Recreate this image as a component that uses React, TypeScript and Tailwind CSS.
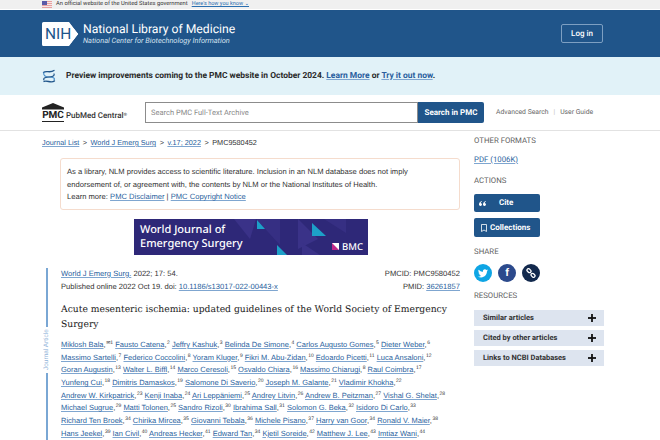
const authors: [string, string][][] = [
  [["Miklosh Bala", "✉1"], ["Fausto Catena", "2"], ["Jeffry Kashuk", "3"], ["Belinda De Simone", "4"], ["Carlos Augusto Gomes", "5"], ["Dieter Weber", "6"]],
  [["Massimo Sartelli", "7"], ["Federico Coccolini", "8"], ["Yoram Kluger", "9"], ["Fikri M. Abu-Zidan", "10"], ["Edoardo Picetti", "11"], ["Luca Ansaloni", "12"]],
  [["Goran Augustin", "13"], ["Walter L. Biffl", "14"], ["Marco Ceresoli", "15"], ["Osvaldo Chiara", "16"], ["Massimo Chiarugi", "8"], ["Raul Coimbra", "17"]],
  [["Yunfeng Cui", "18"], ["Dimitris Damaskos", "19"], ["Salomone Di Saverio", "20"], ["Joseph M. Galante", "21"], ["Vladimir Khokha", "22"]],
  [["Andrew W. Kirkpatrick", "23"], ["Kenji Inaba", "24"], ["Ari Leppäniemi", "25"], ["Andrey Litvin", "26"], ["Andrew B. Peitzman", "27"], ["Vishal G. Shelat", "28"]],
  [["Michael Sugrue", "29"], ["Matti Tolonen", "25"], ["Sandro Rizoli", "30"], ["Ibrahima Sall", "31"], ["Solomon G. Beka", "32"], ["Isidoro Di Carlo", "33"]],
  [["Richard Ten Broek", "34"], ["Chirika Mircea", "35"], ["Giovanni Tebala", "36"], ["Michele Pisano", "37"], ["Harry van Goor", "34"], ["Ronald V. Maier", "38"]],
  [["Hans Jeekel", "39"], ["Ian Civil", "40"], ["Andreas Hecker", "41"], ["Edward Tan", "34"], ["Kjetil Soreide", "42"], ["Matthew J. Lee", "43"], ["Imtiaz Wani", "44"]],
];

const link = "text-[#2a5f9e] underline decoration-[#7fa6d0]";
const sideHead = "font-['Roboto',sans-serif] text-[7.8px] leading-[12px] text-[#5f5f5f]";
const resources = ["Similar articles", "Cited by other articles", "Links to NCBI Databases"];

function Flag() {
  return (
    <svg width="10" height="7" viewBox="0 0 10 7">
      <rect width="10" height="7" fill="#e8a0a0" />
      <rect y="1" width="10" height="1" fill="#f5e6e6" />
      <rect y="3" width="10" height="1" fill="#f5e6e6" />
      <rect y="5" width="10" height="1" fill="#f5e6e6" />
      <rect width="5" height="4" fill="#5a5aa8" />
    </svg>
  );
}

function Helix() {
  return (
    <svg width="14" height="15" viewBox="0 0 14 15" fill="none" strokeLinecap="round">
      <path d="M1.5 3.5C4 1 8 4.5 12 1.5" stroke="#20558a" strokeWidth="1.3" />
      <path d="M2 3.5C0.5 6 3.5 8 7 8S13.5 9 12 11" stroke="#4b8fc8" strokeWidth="1.2" />
      <path d="M12 5C13 7 9.5 8 7 8S0.5 9 2 11" stroke="#20558a" strokeWidth="1.2" />
      <path d="M2 12.5C5 11 9 14.5 12.5 12" stroke="#20558a" strokeWidth="1.3" />
    </svg>
  );
}

function NihLogo() {
  return (
    <div className="relative w-[37px] h-[24px]">
      <svg width="37" height="24" viewBox="0 0 37 24">
        <path d="M1.5 0H27L36.5 12L27 24H1.5A1.5 1.5 0 0 1 0 22.5V1.5A1.5 1.5 0 0 1 1.5 0Z" fill="#fff" />
        <path d="M29 1.5L37 12L29 22.5" fill="none" stroke="#20558a" strokeWidth="1" />
      </svg>
      <span className="absolute left-[3px] top-[4px] font-['Roboto',sans-serif] text-[15.5px] leading-[17px] text-[#20558a]">NIH</span>
    </div>
  );
}

function PmcLogo() {
  return (
    <div className="flex items-end gap-[2px]">
      <div className="w-[22px] flex flex-col items-center">
        <svg width="22" height="7" viewBox="0 0 22 7">
          <path d="M11 0L22 4.5V6.5H0V4.5Z" fill="#222" />
        </svg>
        <span className="font-['Roboto',sans-serif] font-bold text-[10px] leading-[10px] text-[#222] mt-[1px] border-b border-[#222] w-full text-center">PMC</span>
      </div>
      <span className="font-['Roboto',sans-serif] font-medium text-[8px] leading-[12px] text-[#333]">
        PubMed Central<sup className="text-[4.5px]">®</sup>
      </span>
    </div>
  );
}

function JournalBanner() {
  return (
    <div className="relative w-[234px] h-[36px] bg-[#2e2878] overflow-hidden">
      <svg className="absolute inset-0" width="234" height="36" viewBox="0 0 234 36">
        <path d="M100 0H122L116 20Z" fill="#3a3288" />
        <path d="M122 0L146 26V0Z" fill="#3a3288" opacity="0.7" />
        <path d="M164 0L184 20L164 30Z" fill="#3a3288" />
        <path d="M190 0L212 0L212 14Z" fill="#3a3288" opacity="0.7" />
        <path d="M123 1L131 10H123Z" fill="#1da0c8" />
        <path d="M178 4L192 17H178Z" fill="#1da0c8" />
        <path d="M143 26L153 36H143Z" fill="#1da0c8" />
        <path d="M168 24L186 36H168Z" fill="#3a3288" />
        <rect x="198" y="24" width="7" height="7" fill="#fff" />
        <path d="M198 24L205 31H198Z" fill="#c0288a" />
      </svg>
      <div className="absolute left-[6px] top-[4px] font-['Noto_Sans',sans-serif] font-medium text-[11px] leading-[14px] text-white">
        <div>World Journal of</div>
        <div>Emergency Surgery</div>
      </div>
      <span className="absolute left-[208px] top-[23px] font-['Noto_Sans',sans-serif] font-medium text-[9.5px] leading-[10px] text-white">BMC</span>
    </div>
  );
}

function AuthorLine({ line }: { line: [string, string][] }) {
  return (
    <div className="whitespace-nowrap h-[12.7px]">
      {line.map(([name, sup], i) => (
        <span key={name + i}>
          <span className={link}>{name}</span>,<sup className="text-[5px] top-[-3px] ml-[0.5px]">{sup}</sup>{" "}
        </span>
      ))}
    </div>
  );
}

export default function App() {
  return (
    <div className="w-[660px] h-[440px] overflow-hidden bg-white font-['Liberation_Sans',Arial,sans-serif] text-[#333] [text-rendering:geometricPrecision]">
      <div className="h-[10px] bg-[#f0f0f0] border-b border-white flex items-center pl-[42px] gap-[3px] text-[5.8px] text-[#333]">
        <Flag />
        <span className="font-['Roboto',sans-serif] ml-[1px]">An official website of the United States government</span>
        <span className="font-['Roboto',sans-serif] text-[#2a6fb0] underline ml-[1px] text-[5.5px]">Here's how you know ⌄</span>
      </div>

      <header className="h-[47px] bg-[#20558a] flex items-center justify-between pl-[42px] pr-[57px]">
        <div className="flex items-center gap-[4px]">
          <NihLogo />
          <div className="font-['Roboto',sans-serif] text-white">
            <div className="text-[12.2px] leading-[13px]">National Library of Medicine</div>
            <div className="text-[7.4px] leading-[9px] italic text-[#d5e2ef]">National Center for Biotechnology Information</div>
          </div>
        </div>
        <div className="w-[42px] h-[19px] rounded-[2px] border border-[#7d9fc2] flex items-center justify-center font-['Roboto',sans-serif] font-medium text-[8px] text-white">Log in</div>
      </header>

      <div className="h-[38px] bg-[#e1f2f8] flex items-center pl-[42px] font-['Roboto',sans-serif] font-bold text-[8.45px] text-[#2b2b2b]">
        <Helix />
        <span className="ml-[10px]">
          Preview improvements coming to the PMC website in October 2024. <span className={link}>Learn More</span> or <span className={link}>Try it out now</span>.
        </span>
      </div>

      <div className="h-[36px] border-b border-[#e2e2e2] flex items-center pl-[42px] font-['Roboto',sans-serif]">
        <div className="w-[103px]">
          <PmcLogo />
        </div>
        <div className="w-[273px] h-[21px] border border-[#8c8c8c] bg-white flex items-center pl-[5px] text-[7.5px] text-[#8a8a8a]">Search PMC Full-Text Archive</div>
        <div className="w-[66px] h-[21px] rounded-r-[2px] bg-[#20558a] flex items-center justify-center font-bold text-[8px] text-white">Search in PMC</div>
        <div className="ml-[12px] flex items-center text-[6.8px] text-[#666]">
          <span>Advanced Search</span>
          <span className="mx-[5px] text-[#bbb]">|</span>
          <span>User Guide</span>
        </div>
      </div>

      <div className="flex pl-[42px]">
        <main className="w-[418px]">
          <div className="pt-[6px] h-[27px] text-[7.3px] leading-[12px] whitespace-nowrap">
            <span className={link}>Journal List</span>
            <span className="mx-[3.5px]">&gt;</span>
            <span className={link}>World J Emerg Surg</span>
            <span className="mx-[3.5px]">&gt;</span>
            <span className={link}>v.17; 2022</span>
            <span className="mx-[3.5px]">&gt;</span>
            <span>PMC9580452</span>
          </div>

          <div className="ml-[18px] h-[52px] rounded-[3px] border border-[#f5dccd] px-[6px] pt-[7px] text-[7.6px] leading-[12.7px] whitespace-nowrap">
            <div>As a library, NLM provides access to scientific literature. Inclusion in an NLM database does not imply</div>
            <div>endorsement of, or agreement with, the contents by NLM or the National Institutes of Health.</div>
            <div>
              Learn more: <span className={link}>PMC Disclaimer</span> | <span className={link}>PMC Copyright Notice</span>
            </div>
          </div>

          <div className="mt-[9px] pl-[92px]">
            <JournalBanner />
          </div>

          <article className="relative mt-[13px] border-l-[2px] border-[#7aa7d4] ml-[4px] pl-[13px] h-[172px]">
            <span className="absolute left-[-5px] top-[59px] h-[46px] w-[8px] bg-white text-[6.5px] leading-[8px] text-[#8fb3d9] [writing-mode:vertical-rl] rotate-180 text-center">Journal Article</span>
            <div className="flex justify-between text-[7.6px] leading-[12.5px]">
              <div>
                <div><span className={link}>World J Emerg Surg.</span> 2022; 17: 54.</div>
                <div>Published online 2022 Oct 19. doi: <span className={link}>10.1186/s13017-022-00443-x</span></div>
              </div>
              <div className="text-right">
                <div>PMCID: PMC9580452</div>
                <div>PMID: <span className={link}>36261857</span></div>
              </div>
            </div>
            <h1 className="mt-[9px] font-['DejaVu_Serif',serif] font-medium text-[9.2px] leading-[15px] text-[#222]">
              <div className="whitespace-nowrap">Acute mesenteric ischemia: updated guidelines of the World Society of Emergency</div>
              <div>Surgery</div>
            </h1>
            <div className="mt-[7px] text-[7.5px] leading-[12.7px]">
              {authors.map((line, i) => (
                <AuthorLine key={i} line={line} />
              ))}
            </div>
          </article>
        </main>

        <aside className="ml-[14px] w-[130px] pt-[4px]">
          <div className={sideHead}>OTHER FORMATS</div>
          <div className="mt-[7px] font-['Roboto',sans-serif] text-[7.8px] leading-[12px]"><span className={link}>PDF (1006K)</span></div>
          <div className={sideHead + " mt-[9px]"}>ACTIONS</div>
          <div className="mt-[7px] w-[66px] h-[18px] rounded-[2px] bg-[#20558a] flex items-center pl-[5px] font-['Roboto',sans-serif] font-bold text-[8px] text-white">
            <svg width="7" height="5" viewBox="0 0 7 5" fill="#fff" className="mr-[13px]">
              <path d="M3 0C1.2 0.6 0 1.8 0 3.2A1.5 1.5 0 1 0 1.6 1.9C1.8 1.2 2.4 0.7 3 0.4Z" />
              <path d="M7 0C5.2 0.6 4 1.8 4 3.2A1.5 1.5 0 1 0 5.6 1.9C5.8 1.2 6.4 0.7 7 0.4Z" />
            </svg>
            <span>Cite</span>
          </div>
          <div className="mt-[6px] w-[66px] h-[19px] rounded-[2px] bg-[#20558a] flex items-center pl-[7px] gap-[3px] font-['Roboto',sans-serif] font-bold text-[8px] text-white">
            <svg width="6" height="8" viewBox="0 0 6 8" fill="none" stroke="#fff" strokeWidth="0.8">
              <path d="M0.5 0.5H5.5V7.5L3 6L0.5 7.5Z" />
            </svg>
            <span>Collections</span>
          </div>
          <div className={sideHead + " mt-[9px]"}>SHARE</div>
          <div className="mt-[6px] flex gap-[6px]">
            <div className="w-[18px] h-[18px] rounded-full bg-[#0ea5e4] flex items-center justify-center">
              <svg width="10" height="9" viewBox="0 0 24 20" fill="#fff">
                <path d="M24 2.4a9.6 9.6 0 0 1-2.8.8A5 5 0 0 0 23.3.5a9.8 9.8 0 0 1-3.1 1.2 4.9 4.9 0 0 0-8.4 4.5A14 14 0 0 1 1.7.9a4.9 4.9 0 0 0 1.5 6.6 4.9 4.9 0 0 1-2.2-.6 4.9 4.9 0 0 0 3.9 4.9 4.9 4.9 0 0 1-2.2.1 4.9 4.9 0 0 0 4.6 3.4A9.9 9.9 0 0 1 0 17.3 14 14 0 0 0 7.5 19.5c9.1 0 14.3-7.7 14-14.6A10 10 0 0 0 24 2.4Z" />
              </svg>
            </div>
            <div className="w-[18px] h-[18px] rounded-full bg-[#2c4a8c] flex items-center justify-center font-['Liberation_Sans',sans-serif] font-bold text-[11px] text-white">f</div>
            <div className="w-[18px] h-[18px] rounded-full bg-[#12294d] flex items-center justify-center">
              <svg width="10" height="10" viewBox="0 0 10 10" fill="none" stroke="#fff" strokeWidth="1.3">
                <rect x="0.8" y="1.2" width="4.4" height="3" rx="1.5" transform="rotate(45 3 2.7)" />
                <rect x="4.8" y="5.8" width="4.4" height="3" rx="1.5" transform="rotate(45 7 7.3)" />
              </svg>
            </div>
          </div>
          <div className={sideHead + " mt-[8px]"}>RESOURCES</div>
          <div className="mt-[8px] flex flex-col gap-[4px]">
            {resources.map((r) => (
              <div key={r} className="h-[16px] bg-[#dde4ef] flex items-center justify-between pl-[9px] pr-[8px] font-['Roboto',sans-serif] font-bold text-[7.5px] text-[#333]">
                <span>{r}</span>
                <svg width="8" height="8" viewBox="0 0 8 8" fill="#111">
                  <rect x="3.1" width="1.8" height="8" />
                  <rect y="3.1" width="8" height="1.8" />
                </svg>
              </div>
            ))}
          </div>
        </aside>
      </div>
    </div>
  );
}
